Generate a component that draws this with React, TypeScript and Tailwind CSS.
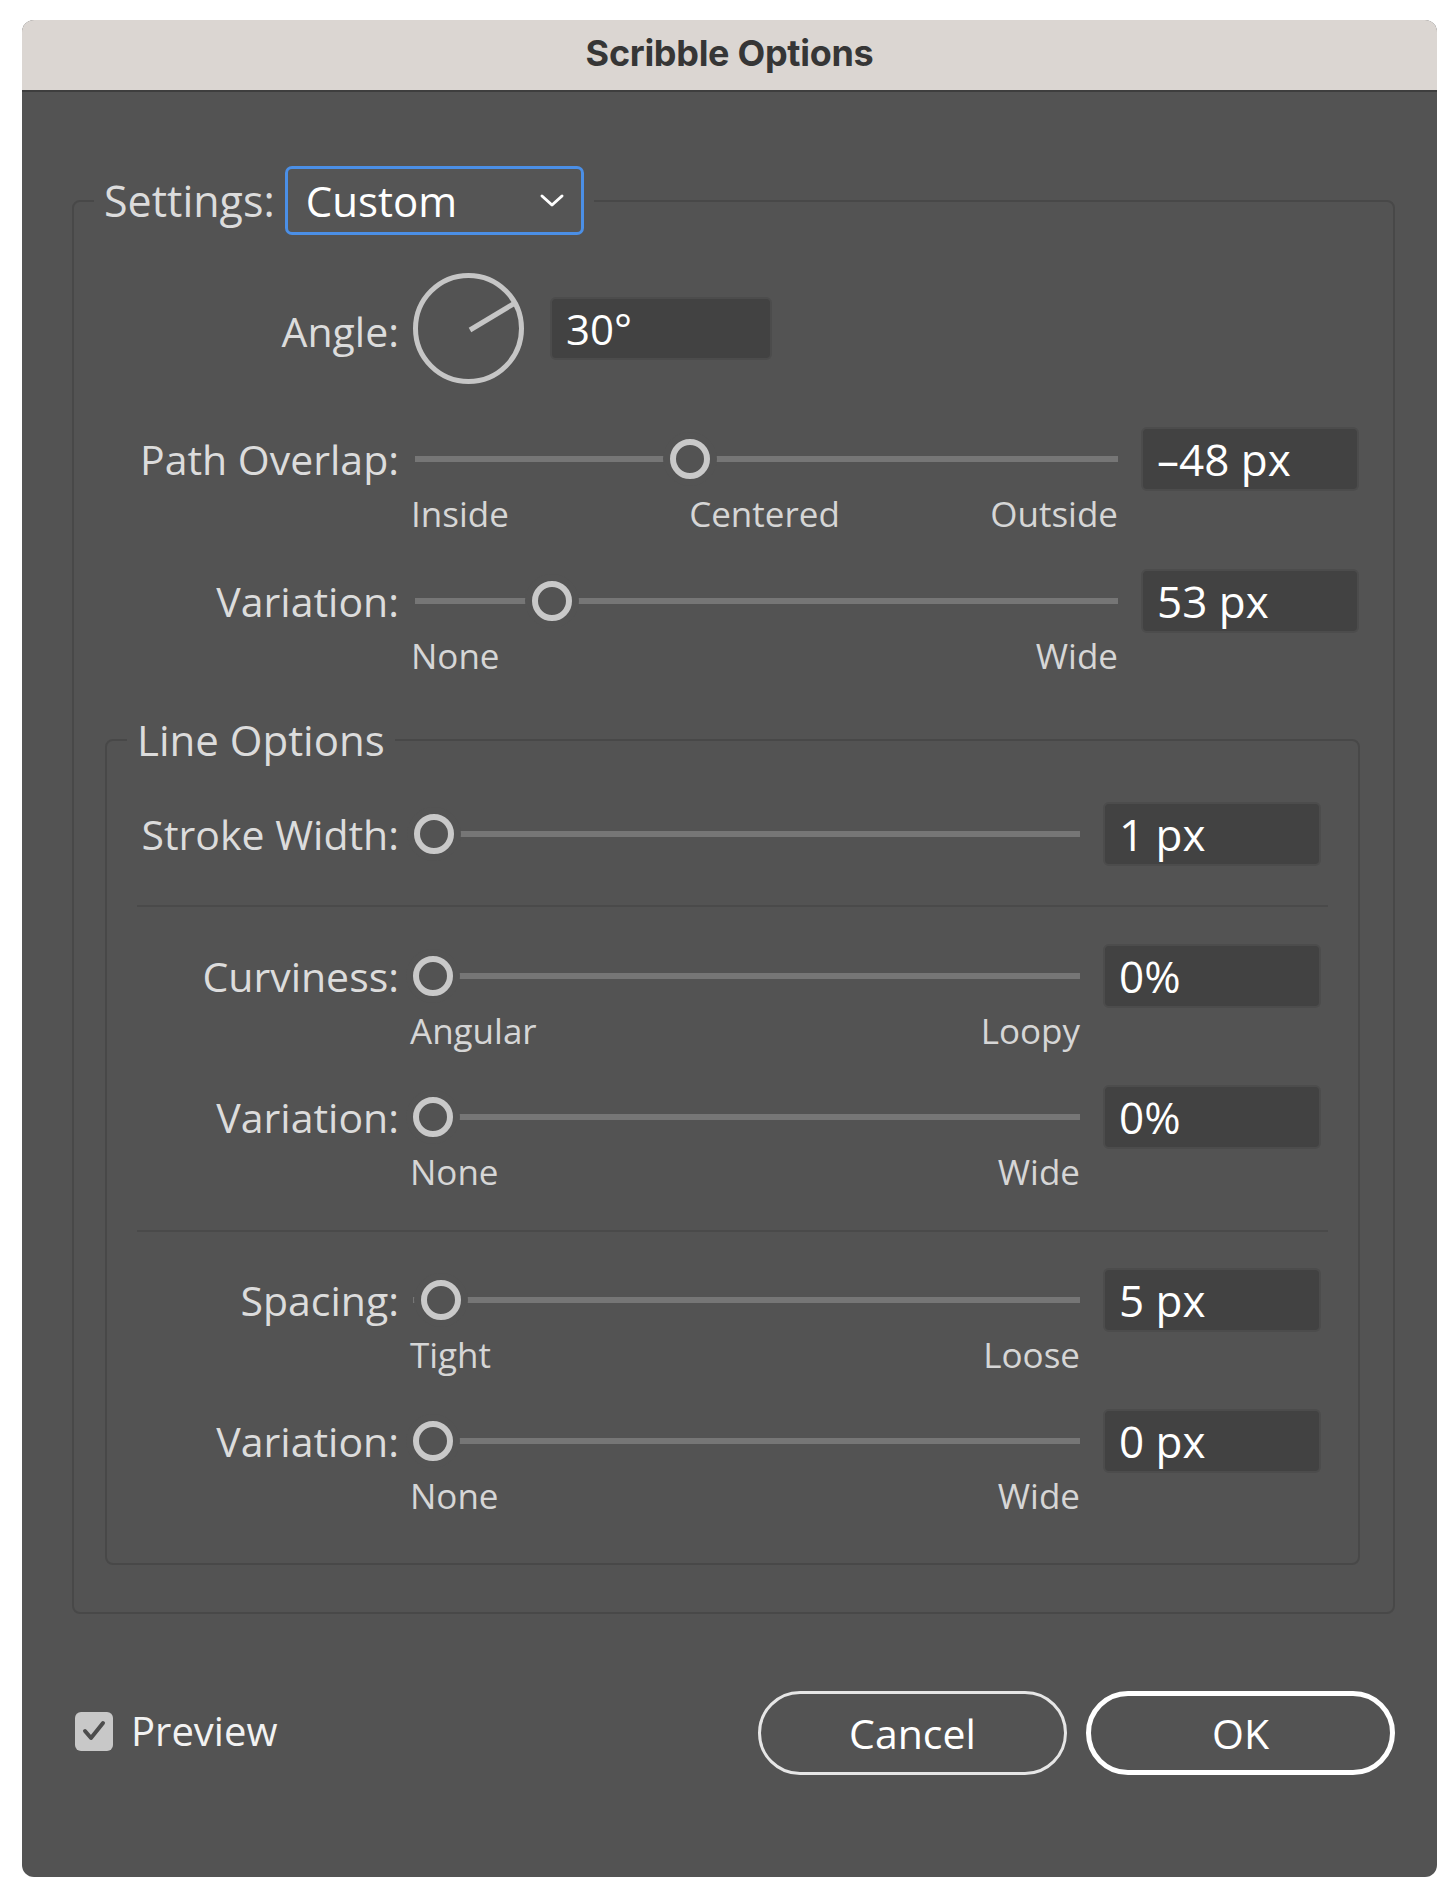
import React from "react";

interface SliderRowProps {
  label: string;
  value: string;
  thumbLeft: number;
  sub?: string[];
  inner?: boolean;
  className?: string;
}

const ValueBox = ({ value }: { value: string }) => (
  <div className="ml-[23px] w-[218px] h-[64px] shrink-0 flex items-center pl-[14px] bg-[#424242] border-2 border-[#4c4c4c] rounded-[6px] text-[44px] leading-none text-white">
    {value}
  </div>
);

const Track = ({ thumbLeft }: { thumbLeft: number }) => (
  <div className="relative h-[64px] flex items-center">
    <div className="h-[6px] w-full bg-[#767676]" />
    <div
      className="absolute top-1/2 -translate-y-1/2 w-[40px] h-[40px] rounded-full border-[6px] border-[#c9c9c9] bg-[#535353] shadow-[0_0_0_7px_#535353]"
      style={{ left: thumbLeft }}
    />
  </div>
);

const SliderRow = ({ label, value, thumbLeft, sub, inner, className }: SliderRowProps) => (
  <div className={"flex items-start " + (className ?? "")}>
    <div
      className={
        (inner ? "w-[292px]" : "w-[325px]") +
        " h-[64px] shrink-0 flex items-center justify-end text-[41px] leading-none text-[#dcdcdc] whitespace-nowrap"
      }
    >
      {label}
    </div>
    <div className={inner ? "ml-[14px] w-[667px] shrink-0" : "ml-[16px] w-[703px] shrink-0"}>
      <Track thumbLeft={thumbLeft} />
      {sub && sub.length === 3 && (
        <div className="mt-[3px] grid grid-cols-3 text-[35px] leading-[40px] text-[#d6d6d6] -ml-[4px]">
          <span className="text-left">{sub[0]}</span>
          <span className="text-center">{sub[1]}</span>
          <span className="text-right">{sub[2]}</span>
        </div>
      )}
      {sub && sub.length === 2 && (
        <div
          className={
            "mt-[3px] flex justify-between text-[35px] leading-[40px] text-[#d6d6d6] " +
            (inner ? "-ml-[3px]" : "-ml-[4px]")
          }
        >
          <span>{sub[0]}</span>
          <span>{sub[1]}</span>
        </div>
      )}
    </div>
    <ValueBox value={value} />
  </div>
);

const App = () => {
  return (
    <div className="min-h-[1890px] bg-white pt-[20px] pl-[22px]">
      <div className="w-[1415px] h-[1857px] flex flex-col bg-[#535353] rounded-[12px] overflow-hidden font-['Open_Sans',sans-serif]">
        {/* title bar */}
        <div className="h-[72px] shrink-0 flex items-center justify-center pb-[4px] bg-[#dbd6d2] border-b-2 border-[#3e3e3e]">
          <span className="font-['Inter',sans-serif] font-bold text-[36px] text-[#363636] tracking-[-0.3px]">
            Scribble Options
          </span>
        </div>

        <div className="pt-[74px] pl-[50px] pr-[42px]">
          <fieldset className="border-2 border-[#484848] rounded-[8px] pb-[47px]">
            <legend className="ml-[20px] px-[10px] flex items-center">
              <span className="text-[43px] leading-none text-[#dcdcdc] mr-[10px]">Settings:</span>
              <div className="w-[299px] h-[69px] flex items-center justify-between pl-[18px] pr-[16px] border-[3px] border-[#4b8fe6] rounded-[7px] bg-[#555555]">
                <span className="text-[42px] leading-none text-white">Custom</span>
                <svg width="26" height="16" viewBox="0 0 26 16" fill="none">
                  <path d="M3 3 L13 12 L23 3" stroke="#ffffff" strokeWidth="3" strokeLinecap="round" strokeLinejoin="round" />
                </svg>
              </div>
            </legend>

            {/* angle */}
            <div className="mt-[37px] flex items-center">
              <div className="w-[325px] flex justify-end text-[41px] leading-none text-[#dcdcdc] pt-[6px]">Angle:</div>
              <svg className="ml-[13px]" width="113" height="113" viewBox="0 0 113 113" fill="none">
                <circle cx="56.5" cy="56.5" r="53" stroke="#c6c6c6" strokeWidth="5" />
                <line x1="58" y1="58" x2="103" y2="31" stroke="#c6c6c6" strokeWidth="5" />
              </svg>
              <div className="ml-[25px] w-[222px] h-[63px] flex items-center pl-[14px] bg-[#424242] border-2 border-[#4c4c4c] rounded-[6px] text-[42px] leading-none text-white">
                30°
              </div>
            </div>

            <SliderRow
              className="mt-[42px]"
              label="Path Overlap:"
              value="–48 px"
              thumbLeft={255}
              sub={["Inside", "Centered", "Outside"]}
            />
            <SliderRow
              className="mt-[35px]"
              label="Variation:"
              value="53 px"
              thumbLeft={117}
              sub={["None", "Wide"]}
            />

            {/* line options */}
            <fieldset className="mt-[36px] ml-[31px] mr-[33px] border-2 border-[#484848] rounded-[8px] pb-[47px]">
              <legend className="ml-[20px] px-[10px] text-[42px] leading-[56px] text-[#dcdcdc]">Line Options</legend>

              <SliderRow className="mt-[34px]" inner label="Stroke Width:" value="1 px" thumbLeft={1} />
              <div className="mt-[39px] mx-[30px] h-[2px] bg-[#4a4a4a]" />
              <SliderRow
                className="mt-[37px]"
                inner
                label="Curviness:"
                value="0%"
                thumbLeft={0}
                sub={["Angular", "Loopy"]}
              />
              <SliderRow
                className="mt-[34px]"
                inner
                label="Variation:"
                value="0%"
                thumbLeft={0}
                sub={["None", "Wide"]}
              />
              <div className="mt-[38px] mx-[30px] h-[2px] bg-[#4a4a4a]" />
              <SliderRow
                className="mt-[36px]"
                inner
                label="Spacing:"
                value="5 px"
                thumbLeft={8}
                sub={["Tight", "Loose"]}
              />
              <SliderRow
                className="mt-[34px]"
                inner
                label="Variation:"
                value="0 px"
                thumbLeft={0}
                sub={["None", "Wide"]}
              />
            </fieldset>
          </fieldset>

          {/* footer */}
          <div className="mt-[77px] pl-[3px] flex items-center justify-between">
            <div className="flex items-center -mt-[4px]">
              <div className="w-[38px] h-[39px] rounded-[6px] bg-[#c8c8c8] flex items-center justify-center">
                <svg width="24" height="22" viewBox="0 0 24 22" fill="none">
                  <path d="M3 11 L9 18 L21 3" stroke="#4d4d4d" strokeWidth="4" strokeLinecap="round" strokeLinejoin="round" />
                </svg>
              </div>
              <span className="ml-[18px] text-[40px] leading-none text-[#f2f2f2]">Preview</span>
            </div>
            <div className="flex items-center gap-[19px]">
              <button className="w-[309px] h-[84px] rounded-full border-[3px] border-[#e6e6e6] text-[41px] leading-none text-white">
                Cancel
              </button>
              <button className="w-[309px] h-[84px] rounded-full border-[5px] border-white text-[41px] leading-none text-white">
                OK
              </button>
            </div>
          </div>
        </div>
      </div>
    </div>
  );
};

export default App;
